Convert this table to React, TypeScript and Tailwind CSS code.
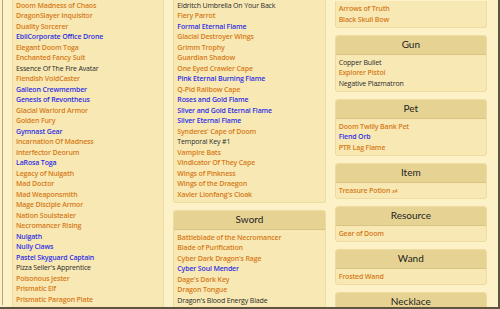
type Tone = "o" | "b" | "k";
type Entry = [string, Tone] | [string, Tone, string];

const toneClass: Record<Tone, string> = {
  o: "text-[#d67a18] font-semibold",
  b: "text-[#2f2fe4] font-semibold",
  k: "text-[#2a2a2a]",
};

const armor: Entry[] = [
  ["Doom Madness of Chaos", "o"],
  ["DragonSlayer Inquisitor", "o"],
  ["Duality Sorcerer", "o"],
  ["EbilCorporate Office Drone", "b"],
  ["Elegant Doom Toga", "o"],
  ["Enchanted Fancy Suit", "o"],
  ["Essence Of The Fire Avatar", "k"],
  ["Fiendish VoidCaster", "o"],
  ["Galleon Crewmember", "b"],
  ["Genesis of Revontheus", "b"],
  ["Glacial Warlord Armor", "o"],
  ["Golden Fury", "o"],
  ["Gymnast Gear", "b"],
  ["Incarnation Of Madness", "o"],
  ["Interfector Deorum", "o"],
  ["LaRosa Toga", "b"],
  ["Legacy of Nulgath", "o"],
  ["Mad Doctor", "o"],
  ["Mad Weaponsmith", "o"],
  ["Mage Disciple Armor", "o"],
  ["Nation Soulstealer", "o"],
  ["Necromancer Rising", "o"],
  ["Nulgath", "b"],
  ["Nully Claws", "b"],
  ["Pastel Skyguard Captain", "b"],
  ["Pizza Seller's Apprentice", "k"],
  ["Poisonous Jester", "o"],
  ["Prismatic Elf", "o"],
  ["Prismatic Paragon Plate", "o"],
];

const cape: Entry[] = [
  ["Eldritch Umbrella On Your Back", "k"],
  ["Fiery Parrot", "o"],
  ["Formal Eternal Flame", "b"],
  ["Glacial Destroyer Wings", "o"],
  ["Grimm Trophy", "o"],
  ["Guardian Shadow", "o"],
  ["One Eyed Crawler Cape", "o"],
  ["Pink Eternal Burning Flame", "b"],
  ["Q-Pid Railbow Cape", "o"],
  ["Roses and Gold Flame", "b"],
  ["Silver and Gold Eternal Flame", "b"],
  ["Silver Eternal Flame", "b"],
  ["Synderes' Cape of Doom", "o"],
  ["Temporal Key #1", "k"],
  ["Vampire Bats", "o"],
  ["Vindicator Of They Cape", "o"],
  ["Wings of Pinkness", "o"],
  ["Wings of the Draegon", "o"],
  ["Xavier Lionfang's Cloak", "o"],
];

const sword: Entry[] = [
  ["Battleblade of the Necromancer", "o"],
  ["Blade of Purification", "o"],
  ["Cyber Dark Dragon's Rage", "o"],
  ["Cyber Soul Mender", "b"],
  ["Dage's Dark Key", "o"],
  ["Dragon Tongue", "o"],
  ["Dragon's Blood Energy Blade", "k"],
];

const bow: Entry[] = [
  ["Arrows of Truth", "o"],
  ["Black Skull Bow", "o"],
];

const sections: { title: string; items: Entry[] }[] = [
  {
    title: "Gun",
    items: [
      ["Copper Bullet", "k"],
      ["Explorer Pistol", "o"],
      ["Negative Plazmatron", "k"],
    ],
  },
  {
    title: "Pet",
    items: [
      ["Doom Twilly Bank Pet", "o"],
      ["Fiend Orb", "b"],
      ["PTR Lag Flame", "o"],
    ],
  },
  { title: "Item", items: [["Treasure Potion", "o", "x4"]] },
  { title: "Resource", items: [["Gear of Doom", "o"]] },
  { title: "Wand", items: [["Frosted Wand", "o"]] },
  { title: "Necklace", items: [] },
];

function Card({ title, items }: { title?: string; items: Entry[] }) {
  return (
    <div
      className={`bg-[#f8e9b4] border border-[#eddb9f] rounded-[3px] overflow-hidden ${
        title ? "" : "border-t-0 rounded-t-none"
      }`}
    >
      {title && (
        <div className="h-[19px] bg-[#e6d394] border-b border-[#d8c483] flex items-center justify-center text-[10px] text-[#1e1e1e] font-['Lato',sans-serif]">
          {title}
        </div>
      )}
      {items.length > 0 && (
        <ul className="pt-[3px] pb-[2px] pl-[3px]">
          {items.map(([name, tone, qty]) => (
            <li
              key={name}
              className={`leading-[10.5px] text-[7px] tracking-[-0.15px] whitespace-nowrap ${toneClass[tone]}`}
            >
              {name}
              {qty && <span className="text-[5px] ml-[2px]">{qty}</span>}
            </li>
          ))}
        </ul>
      )}
    </div>
  );
}

export default function App() {
  return (
    <div className="w-[500px] h-[309px] overflow-hidden bg-[#fdf1c8] pl-[2px] border-r-[2px] border-b-[2px] border-[#5e5540] font-['Open_Sans',sans-serif]">
      <div className="h-full border-l border-[#b5a783] pl-[9px] pr-[11px]">
        <div className="grid grid-cols-3 gap-x-[9px] items-start mt-[-2.25px]">
          <div className="flex flex-col">
            <Card items={armor} />
          </div>
          <div className="flex flex-col gap-[6.5px]">
            <Card items={cape} />
            <Card title="Sword" items={sword} />
          </div>
          <div className="flex flex-col gap-[6.5px] mt-[3.3px]">
            <Card items={bow} />
            {sections.map((s) => (
              <Card key={s.title} title={s.title} items={s.items} />
            ))}
          </div>
        </div>
      </div>
    </div>
  );
}
